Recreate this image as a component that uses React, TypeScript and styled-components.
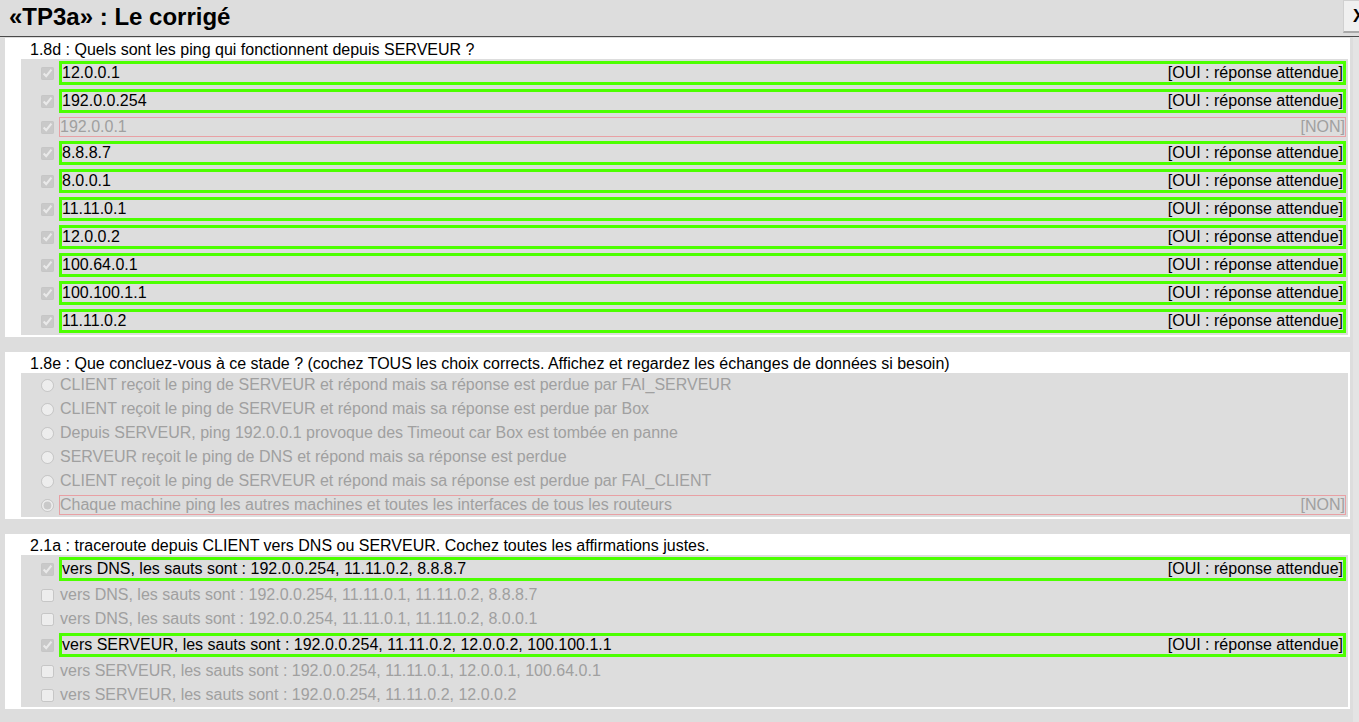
import React from "react";
import styled, { createGlobalStyle, css } from "styled-components";

type Status = "ok" | "non" | "none";

type Choice = {
  text: string;
  checked: boolean;
  status: Status;
};

type Question = {
  title: string;
  kind: "checkbox" | "radio";
  choices: Choice[];
};

const GlobalStyle = createGlobalStyle`
  html, body {
    margin: 0;
    padding: 0;
    background: #dddddd;
    overflow: hidden;
  }
  body {
    font-family: "Liberation Sans", Arial, sans-serif;
  }
`;

const Page = styled.div`
  width: 1359px;
  height: 722px;
  display: flex;
  flex-direction: column;
  background: #dddddd;
  overflow: hidden;
`;

const Header = styled.header`
  flex: none;
  height: 36px;
  display: flex;
  align-items: flex-start;
  border-bottom: 1px solid #4a4a4a;
  background: #dddddd;
`;

const Title = styled.h1`
  flex: 1;
  margin: 0;
  padding: 3px 0 0 9px;
  font-size: 24px;
  line-height: 28px;
  font-weight: bold;
  color: #000;
`;

const CloseButton = styled.button`
  flex: none;
  width: 32px;
  height: 33px;
  margin-right: -16px;
  padding: 0;
  background: #f0f0f0;
  border: 1px solid #d0d0d0;
  border-bottom: 2px solid #a8a8a8;
  font-family: "Liberation Sans", Arial, sans-serif;
  font-size: 18px;
  font-weight: bold;
  color: #000;
`;

const Main = styled.div`
  flex: 1;
  display: flex;
  min-height: 0;
`;

const Content = styled.div`
  flex: 1;
  display: flex;
  flex-direction: column;
  gap: 15px;
  padding: 1px 3px 0 5px;
`;

const Track = styled.div`
  flex: none;
  width: 6px;
  background: #e4e4e4;
`;

const Section = styled.section`
  background: #ffffff;
  padding: 0 2px 2px 0;
`;

const QuestionTitle = styled.div`
  padding: 3px 0 0 25px;
  height: 18px;
  font-size: 16px;
  line-height: 18px;
  color: #000;
`;

const ChoiceList = styled.div`
  margin: 0 0 0 16px;
  background: #dddddd;
  display: flex;
  flex-direction: column;
`;

const Row = styled.div`
  display: flex;
  align-items: center;
  padding-left: 20px;
`;

const Box = styled.input`
  flex: none;
  width: 13px;
  height: 13px;
  margin: 0 3px 0 0;
`;

const Label = styled.div<{ $status: Status }>`
  flex: 1;
  display: flex;
  justify-content: space-between;
  margin: 2px;
  font-size: 16px;
  line-height: 18px;
  padding: 0;
  ${(p) =>
    p.$status === "ok"
      ? css`
          border: 3px solid #4cff00;
          color: #000;
        `
      : p.$status === "non"
      ? css`
          border: 1px solid #e8a0a4;
          color: #a0a0a0;
        `
      : css`
          border: 1px solid transparent;
          color: #a0a0a0;
        `}
`;

const Verdict = styled.span`
  white-space: nowrap;
`;

const questions: Question[] = [
  {
    title: "1.8d : Quels sont les ping qui fonctionnent depuis SERVEUR ?",
    kind: "checkbox",
    choices: [
      { text: "12.0.0.1", checked: true, status: "ok" },
      { text: "192.0.0.254", checked: true, status: "ok" },
      { text: "192.0.0.1", checked: true, status: "non" },
      { text: "8.8.8.7", checked: true, status: "ok" },
      { text: "8.0.0.1", checked: true, status: "ok" },
      { text: "11.11.0.1", checked: true, status: "ok" },
      { text: "12.0.0.2", checked: true, status: "ok" },
      { text: "100.64.0.1", checked: true, status: "ok" },
      { text: "100.100.1.1", checked: true, status: "ok" },
      { text: "11.11.0.2", checked: true, status: "ok" },
    ],
  },
  {
    title:
      "1.8e : Que concluez-vous à ce stade ? (cochez TOUS les choix corrects. Affichez et regardez les échanges de données si besoin)",
    kind: "radio",
    choices: [
      { text: "CLIENT reçoit le ping de SERVEUR et répond mais sa réponse est perdue par FAI_SERVEUR", checked: false, status: "none" },
      { text: "CLIENT reçoit le ping de SERVEUR et répond mais sa réponse est perdue par Box", checked: false, status: "none" },
      { text: "Depuis SERVEUR, ping 192.0.0.1 provoque des Timeout car Box est tombée en panne", checked: false, status: "none" },
      { text: "SERVEUR reçoit le ping de DNS et répond mais sa réponse est perdue", checked: false, status: "none" },
      { text: "CLIENT reçoit le ping de SERVEUR et répond mais sa réponse est perdue par FAI_CLIENT", checked: false, status: "none" },
      { text: "Chaque machine ping les autres machines et toutes les interfaces de tous les routeurs", checked: true, status: "non" },
    ],
  },
  {
    title: "2.1a : traceroute depuis CLIENT vers DNS ou SERVEUR. Cochez toutes les affirmations justes.",
    kind: "checkbox",
    choices: [
      { text: "vers DNS, les sauts sont : 192.0.0.254, 11.11.0.2, 8.8.8.7", checked: true, status: "ok" },
      { text: "vers DNS, les sauts sont : 192.0.0.254, 11.11.0.1, 11.11.0.2, 8.8.8.7", checked: false, status: "none" },
      { text: "vers DNS, les sauts sont : 192.0.0.254, 11.11.0.1, 11.11.0.2, 8.0.0.1", checked: false, status: "none" },
      { text: "vers SERVEUR, les sauts sont : 192.0.0.254, 11.11.0.2, 12.0.0.2, 100.100.1.1", checked: true, status: "ok" },
      { text: "vers SERVEUR, les sauts sont : 192.0.0.254, 11.11.0.1, 12.0.0.1, 100.64.0.1", checked: false, status: "none" },
      { text: "vers SERVEUR, les sauts sont : 192.0.0.254, 11.11.0.2, 12.0.0.2", checked: false, status: "none" },
    ],
  },
];

const verdictText = (s: Status) =>
  s === "ok" ? "[OUI : réponse attendue]" : s === "non" ? "[NON]" : "";

const App = () => {
  return (
    <>
      <GlobalStyle />
      <Page>
        <Header>
          <Title>«TP3a» : Le corrigé</Title>
          <CloseButton>X</CloseButton>
        </Header>
        <Main>
          <Content>
            {questions.map((q, qi) => (
              <Section key={qi}>
                <QuestionTitle>{q.title}</QuestionTitle>
                <ChoiceList>
                  {q.choices.map((c, ci) => (
                    <Row key={ci}>
                      <Box
                        type={q.kind}
                        name={"q" + qi}
                        checked={c.checked}
                        disabled
                        readOnly
                      />
                      <Label $status={c.status}>
                        <span>{c.text}</span>
                        <Verdict>{verdictText(c.status)}</Verdict>
                      </Label>
                    </Row>
                  ))}
                </ChoiceList>
              </Section>
            ))}
          </Content>
          <Track />
        </Main>
      </Page>
    </>
  );
};

export default App;
